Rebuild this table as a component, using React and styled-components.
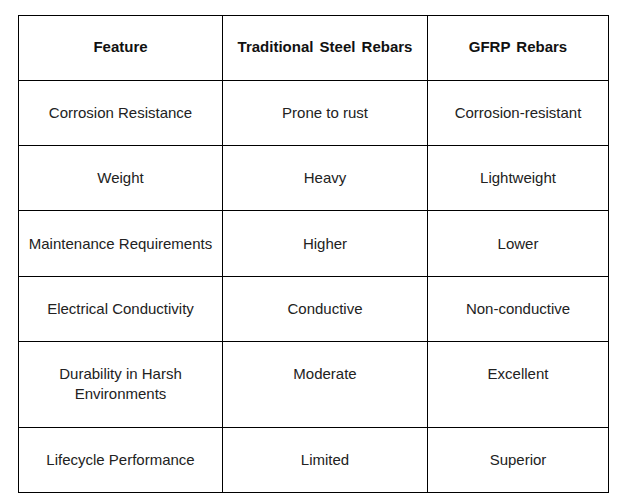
import React from "react";
import styled, { createGlobalStyle } from "styled-components";

const GlobalStyle = createGlobalStyle`
  body {
    margin: 0;
    background: #ffffff;
    font-family: "Liberation Sans", Arial, sans-serif;
  }
`;

const Page = styled.div`
  padding: 15px 0 0 18px;
`;

const Table = styled.table`
  border-collapse: collapse;
  table-layout: fixed;
  width: 590px;
`;

const Col = styled.col`
  width: ${(p) => p.$w}px;
`;

const HeadCell = styled.th`
  border: 1px solid #000;
  height: 65px;
  padding: 0 8px 3px;
  box-sizing: border-box;
  font-size: 15px;
  font-weight: bold;
  color: #111;
  text-align: center;
  vertical-align: middle;
  word-spacing: 2px;
`;

// tall rows keep their text near the top, as in the original
const Cell = styled.td`
  border: 1px solid #000;
  height: ${(p) => p.$h}px;
  padding: ${(p) => (p.$h > 70 ? "22px 8px 0" : "0 8px")};
  font-size: 15px;
  line-height: 20px;
  color: #222;
  text-align: center;
  vertical-align: ${(p) => (p.$h > 70 ? "top" : "middle")};
  box-sizing: border-box;
`;

const rows = [
  ["Corrosion Resistance", "Prone to rust", "Corrosion-resistant", 65],
  ["Weight", "Heavy", "Lightweight", 65],
  ["Maintenance Requirements", "Higher", "Lower", 66],
  ["Electrical Conductivity", "Conductive", "Non-conductive", 65],
  ["Durability in Harsh Environments", "Moderate", "Excellent", 86],
  ["Lifecycle Performance", "Limited", "Superior", 65],
];

export default function App() {
  return (
    <Page>
      <GlobalStyle />
      <Table>
        <colgroup>
          <Col $w={204} />
          <Col $w={205} />
          <Col $w={181} />
        </colgroup>
        <thead>
          <tr>
            <HeadCell>Feature</HeadCell>
            <HeadCell>Traditional Steel Rebars</HeadCell>
            <HeadCell>GFRP Rebars</HeadCell>
          </tr>
        </thead>
        <tbody>
          {rows.map(([a, b, c, h]) => (
            <tr key={a}>
              <Cell $h={h}>{a}</Cell>
              <Cell $h={h}>{b}</Cell>
              <Cell $h={h}>{c}</Cell>
            </tr>
          ))}
        </tbody>
      </Table>
    </Page>
  );
}
